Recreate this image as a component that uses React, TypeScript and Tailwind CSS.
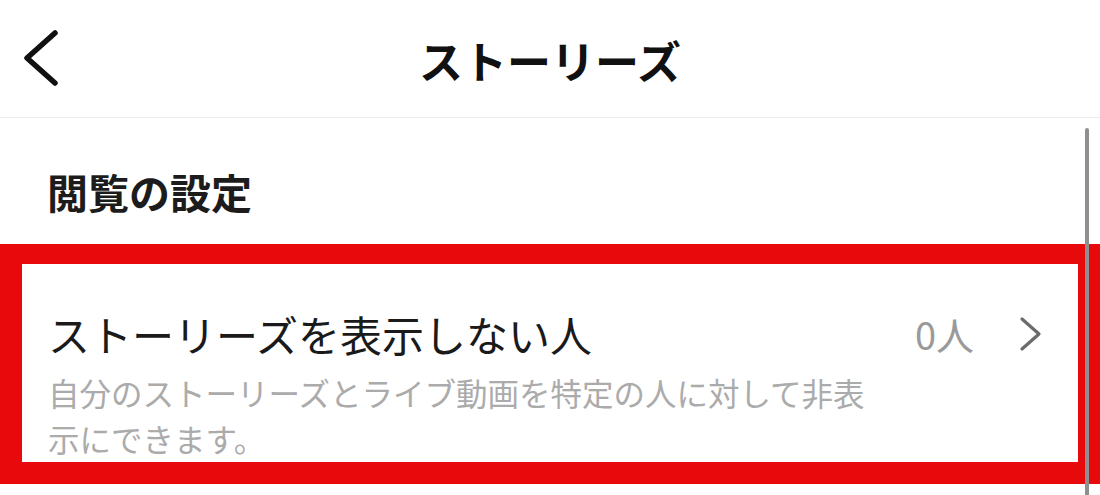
import { ReactNode } from "react";

const jp = { fontFamily: '"Noto Sans CJK JP", "Noto Sans", sans-serif' };

function Header({ title }: { title: string }) {
  return (
    <div className="relative flex h-[118px] items-center justify-center border-b border-[#ececec]">
      <svg
        className="absolute left-[20px] top-[27px]"
        width="46"
        height="62"
        viewBox="0 0 46 62"
        fill="none"
      >
        <polyline
          points="35,6 7,31 35,56"
          stroke="#111"
          strokeWidth="5.5"
          strokeLinecap="round"
          strokeLinejoin="round"
        />
      </svg>
      <h1 className="pt-[2px] text-[44px] font-bold leading-none text-[#111]" style={jp}>
        {title}
      </h1>
    </div>
  );
}

function Highlight({ children }: { children: ReactNode }) {
  return (
    <div className="h-[240px] border-x-[22px] border-t-[20px] border-b-[22px] border-[#e8090c]">
      {children}
    </div>
  );
}

function SettingRow({
  label,
  value,
  description,
}: {
  label: string;
  value: string;
  description: string;
}) {
  return (
    <div className="pl-[26px] pr-[34px] pt-[45px]" style={jp}>
      <div className="flex h-[50px] items-center justify-between">
        <p className="text-[42px] leading-none text-[#1a1a1a]">{label}</p>
        <div className="flex items-center gap-[44px]">
          <span className="text-[38px] leading-none text-[#9a9a9a]">{value}</span>
          <svg width="26" height="36" viewBox="0 0 26 36" fill="none">
            <polyline
              points="4,3 21,18 4,33"
              stroke="#6b6b6b"
              strokeWidth="3.2"
              strokeLinecap="round"
              strokeLinejoin="round"
            />
          </svg>
        </div>
      </div>
      <p className="mt-[10px] w-[830px] text-[31.5px] leading-[46px] text-[#ababab]">
        {description}
      </p>
    </div>
  );
}

export default function App() {
  return (
    <div className="h-[495px] w-[1100px] overflow-hidden bg-white">
      <Header title="ストーリーズ" />
      <div className="relative">
        <div className="absolute right-[11px] top-[10px] h-[400px] w-[4px] rounded-full bg-[#8f8f8f]" />
        <div className="flex h-[126px] items-center pl-[47px] pt-[20px]">
          <h2 className="text-[41px] font-bold leading-none text-[#1c1c1c]" style={jp}>
            閲覧の設定
          </h2>
        </div>
        <Highlight>
          <SettingRow
            label="ストーリーズを表示しない人"
            value="0人"
            description="自分のストーリーズとライブ動画を特定の人に対して非表示にできます。"
          />
        </Highlight>
      </div>
    </div>
  );
}
